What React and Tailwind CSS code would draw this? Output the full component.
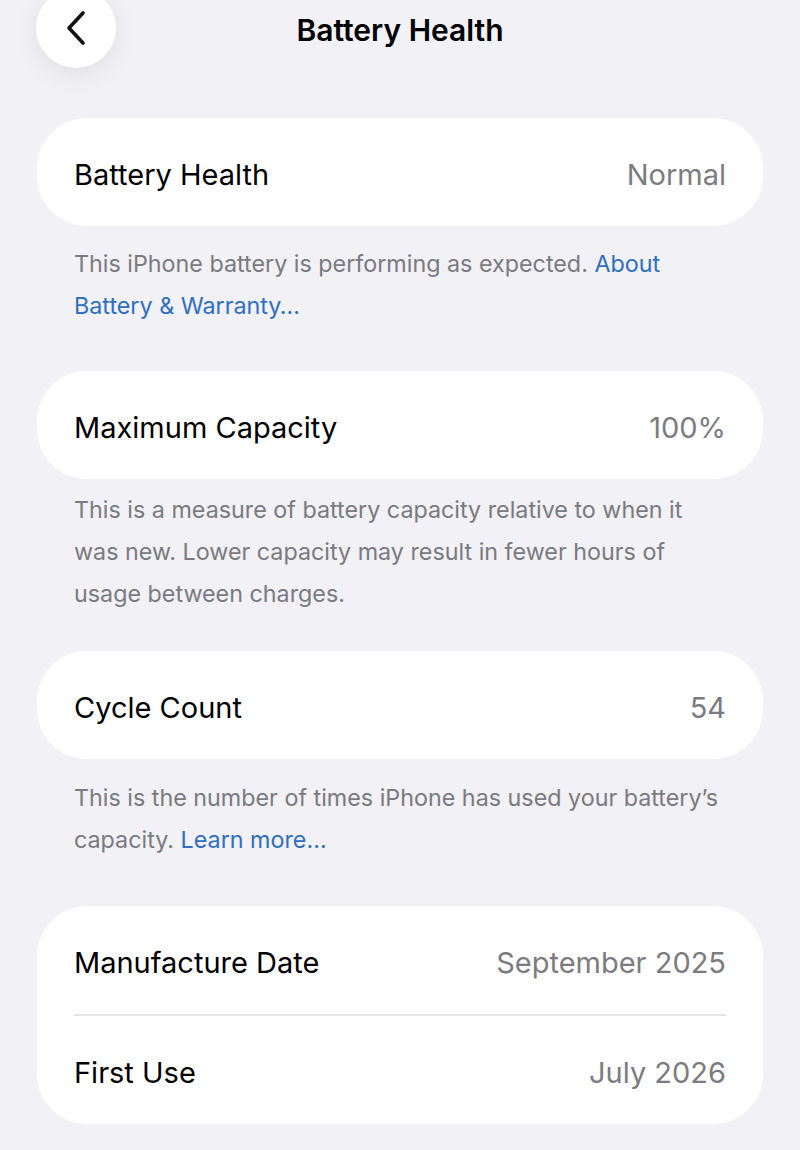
import React from "react";

const font = { fontFamily: "Inter, 'Noto Sans', sans-serif" };

function Row({ label, value }) {
  return (
    <div className="h-[108px] flex items-center justify-between px-[37px] pt-[5px]">
      <span className="text-black">{label}</span>
      <span className="text-[#7c7c80]">{value}</span>
    </div>
  );
}

function Card({ children }) {
  return <div className="bg-white rounded-[50px] text-[29px]">{children}</div>;
}

function Note({ children, className = "" }) {
  return (
    <p className={`px-[37px] text-[23.3px] leading-[42px] text-[#7a7a7f] ${className}`}>
      {children}
    </p>
  );
}

export default function App() {
  return (
    <div className="min-h-[1150px] bg-[#f1f1f6] px-[37px] overflow-hidden" style={font}>
      {/* Header */}
      <div className="relative h-[60px] flex items-center justify-center">
        <button className="absolute left-[-1px] top-[-12px] w-[80px] h-[80px] rounded-full bg-white shadow-[0_6px_24px_rgba(0,0,0,0.08)] flex items-center justify-center">
          <svg width="22" height="36" viewBox="0 0 22 36" fill="none">
            <path d="M18 3L4 18l14 15" stroke="#111" strokeWidth="3.6" strokeLinecap="round" strokeLinejoin="round" />
          </svg>
        </button>
        <h1 className="text-[30px] font-semibold text-black">Battery Health</h1>
      </div>

      <div className="mt-[58px]">
        <Card>
          <Row label="Battery Health" value="Normal" />
        </Card>
        <Note className="mt-[17px] mb-[44px]">
          This iPhone battery is performing as expected.{" "}
          <span className="text-[#2f6fbf]">About Battery &amp; Warranty…</span>
        </Note>

        <Card>
          <Row label="Maximum Capacity" value="100%" />
        </Card>
        <Note className="mt-[10px] mb-[36px]">
          This is a measure of battery capacity relative to when it was new. Lower capacity may
          result in fewer hours of usage between charges.
        </Note>

        <Card>
          <Row label="Cycle Count" value="54" />
        </Card>
        <Note className="mt-[18px] mb-[45px]">
          This is the number of times iPhone has used your battery’s capacity.{" "}
          <span className="text-[#2f6fbf]">Learn more…</span>
        </Note>

        <Card>
          <Row label="Manufacture Date" value="September 2025" />
          <div className="mx-[37px] h-[2px] bg-[#e6e6ea]" />
          <Row label="First Use" value="July 2026" />
        </Card>
      </div>
    </div>
  );
}
